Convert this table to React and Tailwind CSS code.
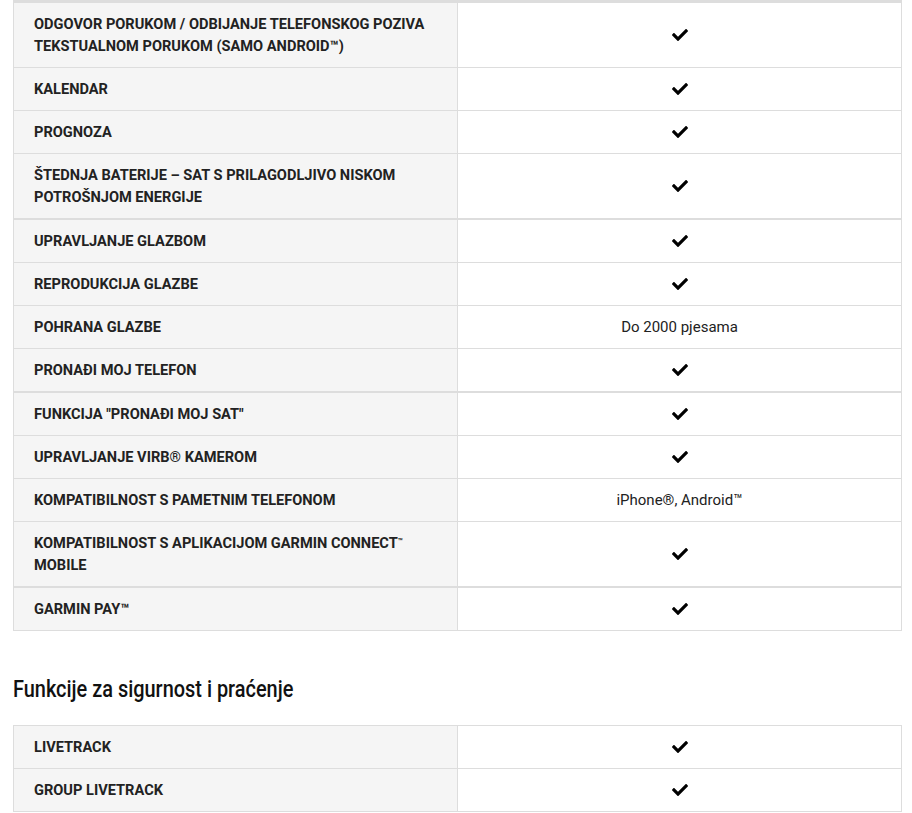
import { FaCheck } from "react-icons/fa";

const groups = [
  [
    ["ODGOVOR PORUKOM / ODBIJANJE TELEFONSKOG POZIVA TEKSTUALNOM PORUKOM (SAMO ANDROID™)", true],
    ["KALENDAR", true],
    ["PROGNOZA", true],
    ["ŠTEDNJA BATERIJE – SAT S PRILAGODLJIVO NISKOM POTROŠNJOM ENERGIJE", true],
  ],
  [
    ["UPRAVLJANJE GLAZBOM", true],
    ["REPRODUKCIJA GLAZBE", true],
    ["POHRANA GLAZBE", "Do 2000 pjesama"],
    ["PRONAĐI MOJ TELEFON", true],
  ],
  [
    ['FUNKCIJA "PRONAĐI MOJ SAT"', true],
    ["UPRAVLJANJE VIRB® KAMEROM", true],
    ["KOMPATIBILNOST S PAMETNIM TELEFONOM", "iPhone®, Android™"],
    [
      <>
        KOMPATIBILNOST S APLIKACIJOM GARMIN CONNECT<sup className="text-[8px]">™</sup>
        <br />
        MOBILE
      </>,
      true,
    ],
  ],
  [["GARMIN PAY™", true]],
];

const safety = [
  ["LIVETRACK", true],
  ["GROUP LIVETRACK", true],
];

function SpecTable({ rows }) {
  return (
    <div className="border border-[#ddd] bg-white">
      {rows.map(([label, value], i) => (
        <div key={i} className="flex border-b border-[#ddd] last:border-b-0">
          <div className="w-[444px] shrink-0 bg-[#f5f5f5] border-r border-[#ddd] py-[10px] pl-[20px] pr-4 text-[14.6px] leading-[22px] font-bold text-[#222]">
            {label}
          </div>
          <div className="flex-1 flex items-center justify-center text-[15px] leading-[22px] text-[#222]">
            {value === true ? <FaCheck size={16} className="text-black" /> : value}
          </div>
        </div>
      ))}
    </div>
  );
}

export default function App() {
  return (
    <div className="bg-white font-['Roboto',sans-serif] overflow-hidden h-[813px]">
      <div className="ml-[13px] w-[889px]">
        <div className="h-[2px] bg-[#ddd]" />
        {groups.map((g, i) => (
          <SpecTable key={i} rows={g} />
        ))}
        <h2 className="mt-[42px] mb-[20px] text-[24px] leading-[32px] text-[#111] font-medium">
          <span className="inline-block origin-left scale-x-[0.83] whitespace-nowrap">
            Funkcije za sigurnost i praćenje
          </span>
        </h2>
        <SpecTable rows={safety} />
      </div>
    </div>
  );
}
